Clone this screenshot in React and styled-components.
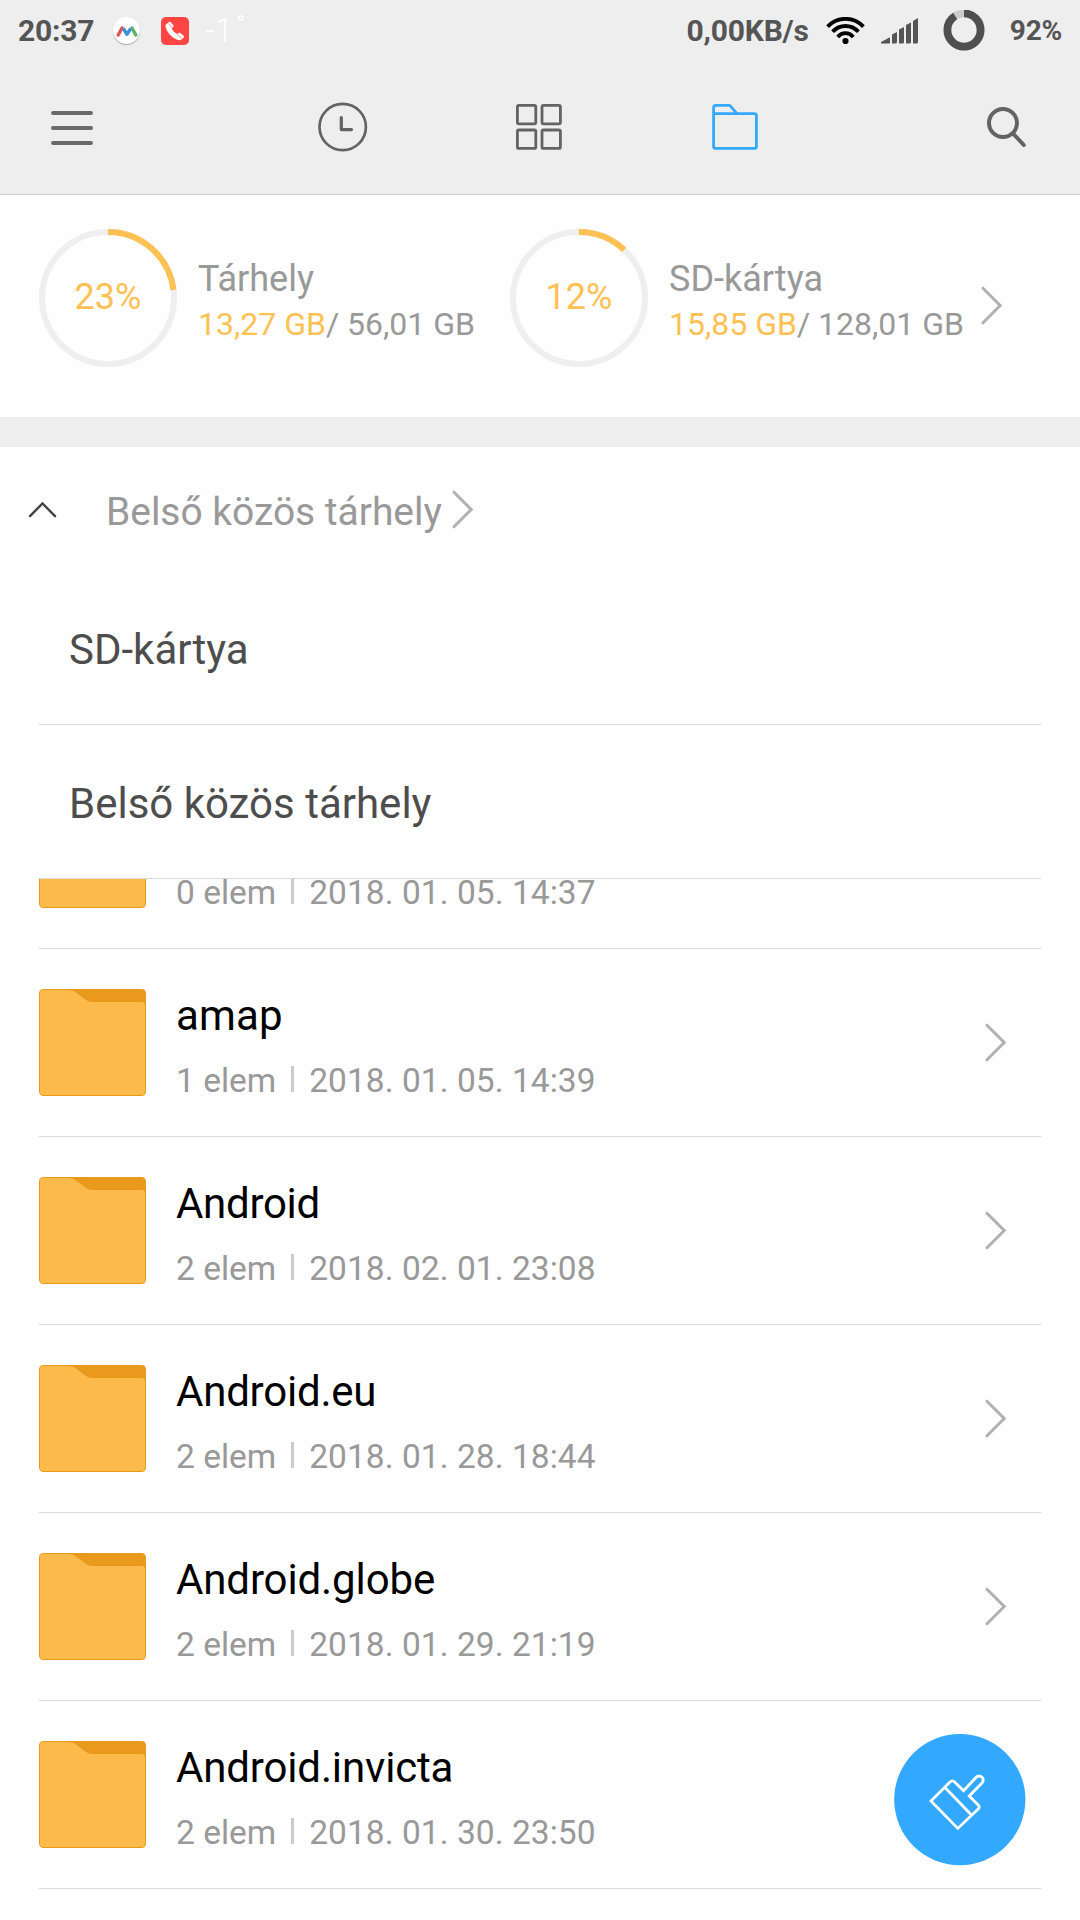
import React from "react";
import styled, { createGlobalStyle } from "styled-components";

const GlobalStyle = createGlobalStyle`
  * { box-sizing: border-box; }
  html, body { margin: 0; padding: 0; background: #fefefe; }
  body { font-family: Roboto, "Noto Sans", sans-serif; overflow: hidden; }
  svg { display: block; flex: none; }
`;

const Screen = styled.div`
  position: relative;
  display: flex;
  flex-direction: column;
  width: 1080px;
  height: 1920px;
  overflow: hidden;
  background: #fefefe;
`;

const Header = styled.header`
  height: 195px;
  background: #eeeeee;
  border-bottom: 1px solid #c9c9c9;
`;

const StatusBar = styled.div`
  display: flex;
  align-items: center;
  height: 61px;
  padding: 0 18px 0 18px;
  color: #555555;
`;

const StatusText = styled.span`
  display: block;
  font-size: ${(p) => p.$size || 30}px;
  font-weight: 700;
  line-height: 36px;
  letter-spacing: -0.2px;
  white-space: nowrap;
`;

const AppBadge = styled.span`
  display: flex;
  align-items: center;
  justify-content: center;
  width: 27px;
  height: 27px;
  margin-left: 19px;
  border-radius: 50%;
  background: #ffffff;
  box-shadow: 0 1px 1px rgba(0, 0, 0, 0.3);
`;

const CallBadge = styled.span`
  display: flex;
  align-items: center;
  justify-content: center;
  width: 28px;
  height: 28px;
  margin-left: 21px;
  border-radius: 5px;
  background: #ff4444;
`;

const Temperature = styled.span`
  display: flex;
  align-items: flex-start;
  margin-left: 16px;
  color: #ffffff;
  font-size: 33px;
  font-weight: 300;
  line-height: 40px;
`;

const Degree = styled.span`
  margin: -7px 0 0 3px;
  font-size: 24px;
  font-weight: 400;
`;

const StatusRight = styled.div`
  display: flex;
  align-items: center;
  margin-left: auto;
`;

const StatusIcon = styled.span`
  margin-left: ${(p) => p.$gap}px;
`;

const Toolbar = styled.nav`
  display: grid;
  grid-template-columns: 245px repeat(3, 196px) 1fr;
  align-items: center;
  height: 131px;
`;

const ToolButton = styled.button`
  display: flex;
  justify-content: ${(p) => p.$align || "center"};
  padding: ${(p) => p.$pad || "0"};
  border: 0;
  background: none;
  color: ${(p) => (p.$active ? "#33a8ff" : "#636363")};
`;

const StorageSummary = styled.section`
  display: flex;
  height: 222px;
  padding: 34px 0 0 39px;
`;

const StorageItem = styled.div`
  display: flex;
  width: 471px;
`;

const Gauge = styled.div`
  display: grid;
  place-items: center;
  width: 138px;
  height: 138px;
  & > * { grid-area: 1 / 1; }
`;

const GaugeValue = styled.span`
  color: #ffc154;
  font-size: 36px;
  line-height: 42px;
  padding-bottom: 3px;
`;

const StorageText = styled.div`
  display: flex;
  flex-direction: column;
  gap: 4px;
  margin: 29px 0 0 21px;
  color: #999999;
  white-space: nowrap;
`;

const StorageName = styled.span`
  font-size: 36px;
  line-height: 42px;
`;

const StorageSize = styled.span`
  font-size: 32px;
  line-height: 40px;
`;

const Used = styled.span`
  color: #ffc154;
`;

const StorageArrow = styled.div`
  padding-top: 57px;
`;

const Band = styled.div`
  height: 30px;
  background: #eeeeee;
`;

const Breadcrumb = styled.div`
  display: flex;
  align-items: center;
  height: 124px;
  padding: 1px 0 0 28px;
  color: #999999;
  font-size: 39px;
  line-height: 48px;
  letter-spacing: -0.04px;
`;

const Crumb = styled.span`
  margin: 5px 10px 0 49px;
`;

const Volume = styled.div`
  display: flex;
  align-items: center;
  height: 154px;
  margin: 0 39px;
  padding: 5px 0 0 30px;
  border-bottom: 1px solid #d9d9d9;
  color: #4d4d4d;
  font-size: 42px;
  line-height: 50px;
`;

const FileList = styled.div`
  display: flex;
  flex: 1;
  flex-direction: column;
  justify-content: flex-end;
  padding: 0 39px 31px;
  overflow: hidden;
`;

const FileRow = styled.div`
  display: flex;
  flex: none;
  height: 188px;
  border-bottom: 1px solid #d9d9d9;
  padding-top: 40px;
`;

const FileInfo = styled.div`
  display: flex;
  flex: 1;
  flex-direction: column;
  gap: 26px;
  padding: 2px 0 0 30px;
`;

const FileName = styled.span`
  height: 50px;
  color: #000000;
  font-size: 42px;
  line-height: 50px;
  letter-spacing: ${(p) => p.$tracking}px;
`;

const FileMeta = styled.div`
  display: flex;
  color: #999999;
  font-size: 33.5px;
  line-height: 28px;
  white-space: nowrap;
`;

const FileDate = styled.span`
  letter-spacing: 0.05px;
`;

const Bar = styled.span`
  width: 3px;
  height: 26px;
  margin: -1px 15px 0;
  background: #cccccc;
`;

const RowArrow = styled.div`
  padding: 34px 34px 0 0;
`;

const CleanButton = styled.button`
  position: absolute;
  left: 894px;
  top: 1734px;
  width: 132px;
  height: 132px;
  padding: 0;
  border: 0;
  background: none;
`;

const Chevron = () => (
  <svg width="22" height="39" viewBox="0 0 22 39" fill="none" stroke="#b1b1b1" strokeWidth="3" strokeLinecap="round">
    <path d="M2 2.2 L19.2 19.5 L2 36.8" />
  </svg>
);

const FolderIcon = () => (
  <svg width="107" height="107" viewBox="0 0 107 107">
    <rect width="107" height="107" rx="4.5" fill="#e9991c" />
    <path
      d="M1 4 Q1 1 4 1 H30 Q34 1 37 3.5 L47 11 Q50 13 53 13 H103 Q106 13 106 16 V103 Q106 106 103 106 H4 Q1 106 1 103 Z"
      fill="#fcba4b"
    />
  </svg>
);

function Ring({ percent }) {
  const length = 2 * Math.PI * 66;
  return (
    <svg width="138" height="138" viewBox="0 0 138 138" fill="none" strokeWidth="6">
      <circle cx="69" cy="69" r="66" stroke="#efefef" />
      <circle
        cx="69"
        cy="69"
        r="66"
        stroke="#ffc154"
        strokeDasharray={`${(length * percent) / 100} ${length}`}
        transform="rotate(-90 69 69)"
      />
    </svg>
  );
}

function Storage({ percent, name, used, total }) {
  return (
    <StorageItem>
      <Gauge>
        <Ring percent={percent} />
        <GaugeValue>{percent}%</GaugeValue>
      </Gauge>
      <StorageText>
        <StorageName>{name}</StorageName>
        <StorageSize>
          <Used>{used}</Used>/ {total}
        </StorageSize>
      </StorageText>
    </StorageItem>
  );
}

const files = [
  { name: "", count: "0 elem", date: "2018. 01. 05. 14:37" },
  { name: "amap", tracking: 0.2, count: "1 elem", date: "2018. 01. 05. 14:39" },
  { name: "Android", tracking: -0.3, count: "2 elem", date: "2018. 02. 01. 23:08" },
  { name: "Android.eu", tracking: -0.22, count: "2 elem", date: "2018. 01. 28. 18:44" },
  { name: "Android.globe", tracking: -0.12, count: "2 elem", date: "2018. 01. 29. 21:19" },
  { name: "Android.invicta", tracking: -0.15, count: "2 elem", date: "2018. 01. 30. 23:50" },
];

export default function App() {
  return (
    <Screen>
      <GlobalStyle />
      <Header>
        <StatusBar>
          <StatusText>20:37</StatusText>
          <AppBadge>
            <svg width="22" height="14" viewBox="0 0 22 14" fill="none" strokeWidth="3.4" strokeLinecap="round">
              <path d="M2.2 11 L6 4" stroke="#e05555" />
              <path d="M16 4 L19.8 11" stroke="#5bb55f" />
              <path d="M7.2 4.4 L11 10.2 L14.8 4.4" stroke="#3f8fd8" strokeLinejoin="round" strokeLinecap="butt" />
            </svg>
          </AppBadge>
          <CallBadge>
            <svg width="20" height="20" viewBox="0 0 20 20" fill="#ffffff">
              <path d="M1 3.4 L4 1 Q5 .2 5.8 1.2 L8.4 4.2 Q9 5.2 8.2 6 L6.6 7.4 Q8.4 11 12 13 L13.6 11.9 Q14.5 11.4 15.3 12 L18.7 14.8 Q19.4 15.6 18.7 16.6 Q16.2 20 12.8 19 Q8.5 17.8 4.6 13.6 Q1 9.4 .4 5.2 Q.3 4 1 3.4 Z" />
              <path d="M3.4 2.6 L7.6 7 M12.2 13.4 L16.8 17.4" stroke="#ff4444" strokeWidth=".6" />
            </svg>
          </CallBadge>
          <Temperature>
            -1<Degree>°</Degree>
          </Temperature>
          <StatusRight>
            <StatusText>0,00KB/s</StatusText>
            <StatusIcon $gap={17}>
              <svg width="40" height="28" viewBox="0 0 40 28" fill="none" stroke="#000000" strokeWidth="3.8">
                <path d="M1.6 9.6 Q9 1.8 19.5 1.8 Q30 1.8 37.4 9.6" />
                <path d="M6.6 14.8 Q12 9 19.5 9 Q27 9 32.4 14.8" />
                <path d="M11.7 20 Q15 16.2 19.5 16.2 Q24 16.2 27.3 20" />
                <circle cx="19.5" cy="24" r="3.1" fill="#000000" stroke="none" />
              </svg>
            </StatusIcon>
            <StatusIcon $gap={15}>
              <svg width="38" height="26" viewBox="0 0 38 26" fill="#555555">
                <path d="M0 25.4 V24 L9 19.3 V25.4 Z" />
                <path d="M11 25.4 V16.5 L16 14 V24.4 L15 25.4 Z" />
                <path d="M18 25.4 V11.5 L23 9 V24.4 L22 25.4 Z" />
                <path d="M25 25.4 V7 L30 4.5 V24.4 L29 25.4 Z" />
                <path d="M32 25.4 V3 L37 0 V24.4 L36 25.4 Z" />
              </svg>
            </StatusIcon>
            <StatusIcon $gap={24}>
              <svg width="42" height="42" viewBox="0 0 42 42" fill="none" strokeWidth="7.8">
                <circle cx="21" cy="20" r="16.6" stroke="#cccccc" />
                <circle
                  cx="21"
                  cy="20"
                  r="16.6"
                  stroke="#4f4f4f"
                  pathLength="100"
                  strokeDasharray="91 100"
                  transform="rotate(-90 21 20)"
                />
              </svg>
            </StatusIcon>
            <StatusIcon $gap={25}>
              <StatusText $size={28}>92%</StatusText>
            </StatusIcon>
          </StatusRight>
        </StatusBar>
        <Toolbar>
          <ToolButton $align="flex-start" $pad="2px 0 0 51px">
            <svg width="42" height="34" viewBox="0 0 42 34" fill="#6b6b6b">
              <rect width="42" height="4" rx="2" />
              <rect y="15" width="42" height="4" rx="2" />
              <rect y="30" width="42" height="4" rx="2" />
            </svg>
          </ToolButton>
          <ToolButton>
            <svg width="50" height="50" viewBox="0 0 50 50" fill="none" stroke="currentColor" strokeWidth="2.7">
              <circle cx="24.7" cy="25" r="23.2" />
              <path d="M23.3 15.5 V27.6 H33.5" strokeWidth="3.2" strokeLinecap="round" strokeLinejoin="round" />
            </svg>
          </ToolButton>
          <ToolButton>
            <svg width="46" height="46" viewBox="0 0 46 46" fill="none" stroke="currentColor" strokeWidth="2.8">
              <rect x="1.4" y="1.4" width="18.4" height="18.4" rx="1.5" />
              <rect x="26" y="1.4" width="18.4" height="18.4" rx="1.5" />
              <rect x="1.4" y="26" width="18.4" height="18.4" rx="1.5" />
              <rect x="26" y="26" width="18.4" height="18.4" rx="1.5" />
            </svg>
          </ToolButton>
          <ToolButton $active>
            <svg width="46" height="46" viewBox="0 0 46 46" fill="none" stroke="currentColor" strokeWidth="2.8" strokeLinejoin="round">
              <path d="M1.6 9.6 V3.4 Q1.6 1.4 3.6 1.4 H16.8 Q17.8 1.4 18.5 2.2 L25 9.6" />
              <path d="M1.6 9.6 H42.4 Q44.4 9.6 44.4 11.6 V42.4 Q44.4 44.4 42.4 44.4 H3.6 Q1.6 44.4 1.6 42.4 Z" />
            </svg>
          </ToolButton>
          <ToolButton $align="flex-start" $pad="0 0 0 154px">
            <svg width="40" height="40" viewBox="0 0 40 40" fill="none" stroke="currentColor" strokeWidth="4" strokeLinecap="round">
              <circle cx="16" cy="16" r="14" />
              <path d="M26.5 27 L36.8 38" />
            </svg>
          </ToolButton>
        </Toolbar>
      </Header>

      <StorageSummary>
        <Storage percent={23} name="Tárhely" used="13,27 GB" total="56,01 GB" />
        <Storage percent={12} name="SD-kártya" used="15,85 GB" total="128,01 GB" />
        <StorageArrow>
          <Chevron />
        </StorageArrow>
      </StorageSummary>
      <Band />

      <Breadcrumb>
        <svg width="29" height="17" viewBox="0 0 29 17" fill="none" stroke="#444444" strokeWidth="2.4" strokeLinecap="round">
          <path d="M2 15.2 L14.5 2.4 L27 15.2" />
        </svg>
        <Crumb>Belső közös tárhely</Crumb>
        <Chevron />
      </Breadcrumb>

      <Volume>SD-kártya</Volume>
      <Volume>Belső közös tárhely</Volume>

      <FileList>
        {files.map((f) => (
          <FileRow key={f.date}>
            <FolderIcon />
            <FileInfo>
              <FileName $tracking={f.tracking || 0}>{f.name}</FileName>
              <FileMeta>
                {f.count}
                <Bar />
                <FileDate>{f.date}</FileDate>
              </FileMeta>
            </FileInfo>
            <RowArrow>
              <Chevron />
            </RowArrow>
          </FileRow>
        ))}
      </FileList>

      <CleanButton>
        <svg width="132" height="132" viewBox="0 0 132 132" fill="none" stroke="#ffffff" strokeWidth="2.8">
          <circle cx="65.8" cy="65.6" r="65.6" fill="#33a8ff" stroke="none" />
          <path d="M37 67 L56 48 Q58.3 45.6 60.7 48 L69.6 56.8 L82.2 43.2 A4 4 0 0 1 88 49 L75.2 62.1 L84.2 71 Q86.2 73 84.2 75 L63.8 94.4 Z" />
          <path d="M50.7 53.3 L77 80.5" />
        </svg>
      </CleanButton>
    </Screen>
  );
}
